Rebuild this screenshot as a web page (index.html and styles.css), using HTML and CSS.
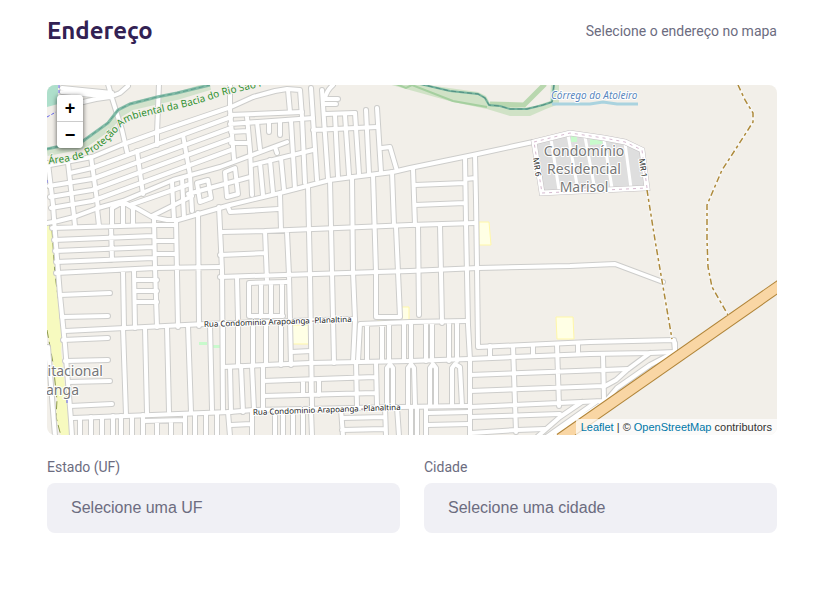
FILE: index.html
```html
<!DOCTYPE html>
<html lang="pt-BR">
<head>
<meta charset="utf-8">
<meta name="viewport" content="width=device-width, initial-scale=1">
<title>Endereço</title>
<link rel="stylesheet" href="styles.css">
</head>
<body>
<form class="address">
  <header class="legend">
    <h2 class="legend-title">Endereço</h2>
    <span class="legend-hint">Selecione o endereço no mapa</span>
  </header>

  <div class="map">
    <svg class="map-canvas" viewBox="47 85 730 350" preserveAspectRatio="xMidYMid slice" role="img" aria-label="Mapa">
      <defs>
        <path id="area-label" d="M49 164C60 163 74 161 84 157C102 149 112 137 122 126C130 118 146 116 163 112C182 108 202 103 221 96L275 83"/>
        <g id="roads">
          <!-- north-west grid -->
          <path d="M108 84L112 98L122 130L127 152M159 84L157 133M157 145L157 133M62 88L112 93M62 92L112 97M83 102L96 99L110 97L120 93L128 86M60 104L84 102"/>
          <path d="M50 165L92 157L121 145L157 132L231 107L253 97L275 91L287 89L300 90L302 117L305 183"/>
          <path d="M70 173L92 168L231 117M49 186L92 179L231 128M50 197L92 190L231 139M51 208L92 201L231 150M47 223L58 221L74 217L98 208L123 201L173 180L220 167L287 142M152 216L192 196M130 205L190 184"/>
          <path d="M48 163L53 205L55 233L60 295L65 345L71 420L72 436M68 163L74 216M91 157L98 208M137 151L143 194M183 135L190 175L192 211M172 182L174 220M182 178L184 218"/>
          <path d="M230 84L230 110L234 159M230 115L302 112M230 124L313 118M247 117L250 150L252 195M231 132L247 131M231 143L248 143"/>
          <path d="M257 122L260 149M269 122V132M280 121V135M291 121L295 189M288 90L290 112M275 147L277 153M252 165L313 150M260 163L263 195M270 160L273 193M281 158L284 190"/>
          <path d="M197 183L208 180L211 198L200 202ZM225 172L235 168L238 194L227 197ZM188 194L250 177"/>
          <path d="M311 88L317 180M322 90L328 179M333 85Q326 91 325 99M323 99H338M323 104H336M325 114L355 113M313 130L377 127"/>
          <path d="M335 115L338 177M345 115L349 175M355 113L359 174M366 110L369 173M377 108L381 172M382 148L390 147L397 171"/>
          <!-- central avenues -->
          <path d="M123 202L138 209L152 217L167 220L178 220L230 205L280 193L330 180L353 177L393 172L410 168L473 155L533 142"/>
          <path d="M280 194L281 230M308 187L310 275L312 407M330 180L332 273L334 363M352 177L353 272L355 320L353 362M373 175L376 272L376 317H400M392 172L394 225M396 227L400 317M228 207L230 212L278 209"/>
          <path d="M222 232L265 231L410 225L475 223M220 255L265 253M265 231L267 281M287 232L289 275L291 365M220 277L377 272L410 271L478 268L570 266L615 264L663 282"/>
          <path d="M219 207L222 270L223 412M237 278L238 320M249 283L287 282M249 283V316H283M261 283V316M271 283V316M282 283V316"/>
          <path d="M413 169L415 225M415 205L465 203M415 185L465 183M466 179L475 178M465 157L466 223L468 325L470 360L470 436M475 155L476 200L477 268L478 347L590 342L674 340L675 352M418 225L419 315M440 225L442 323"/>
          <!-- west -->
          <path d="M123 202L112 208V224M123 202V225M123 202L133 208V224M97 208L99 226M74 216L75 226M52 228L154 225H176M54 240L153 236M55 251L153 247M56 262L153 258M56 273L155 268L220 267M155 241H175M155 254H175M111 227L112 260M154 219L155 268L157 327M176 220L178 327M198 213L199 326M123 271L124 328M134 271L135 328"/>
          <path d="M135 280H157M135 291H157M135 302H157M60 295L110 293M62 317L108 316M63 340L108 338M65 361L108 360M68 382L110 381M70 406L112 404"/>
          <path d="M65 331L205 324L355 319M223 367L310 363L410 361L469 359L513 357L590 354L650 353L675 352"/>
          <path d="M123 328L126 415M145 328L147 413M167 327L169 412M188 326L191 412M210 325L212 410M48 347L55 436"/>
          <!-- south centre -->
          <path d="M358 361L360 324L410 322L467 321M367 324V361M382 324V361M389 324V361M404 323V361M411 323L411 361M426 322L426 361M432 322V361M449 322V361M457 322V361"/>
          <path d="M223 325V367M238 325V366M253 323V366M266 322V365M281 321V365M291 352L311 351M230 367L231 412M241 366L243 412M252 366L254 410M263 366L263 410M263 381L375 377M263 396L375 393M303 380V395M311 380V395M319 380V395M356 362L357 407M376 363L377 406"/>
          <path d="M387 406V368L390 364L393 368V406M408 406V368L411 364L414 368L415 406M430 406V368L433 364L436 368V406M452 406V368L455 364L460 367L462 406"/>
          <path d="M73 418L126 416L230 412L253 410L401 407L468 406"/>
          <path d="M80 418V436M91 417V436M102 417V436M113 416V436M121 416V436M132 416V436M143 415V436M157 421V436M171 421V436M185 414V436M195 414V436M206 413V436M217 413V436M228 412L230 436M252 411V436M275 410V436M283 410V436M293 410V436M303 410V436M311 410L312 436M341 409L343 436M385 407L386 436M397 407L399 436M411 407V436M417 407V436M426 407V436M143 421L184 420M231 425L251 424M342 418L384 417M342 430L384 429M427 413L469 412M427 425L469 424"/>
          <!-- south-east -->
          <path d="M490 346V358M513 346L516 432M533 345V356M557 345L559 406M578 343V354M603 355L604 400M470 375L603 370L628 369M470 391L604 386M470 407L559 403L603 401M470 417L560 414M471 433L517 430L545 429"/>
          <path d="M650 353L627 370L616 380L605 386M673 353L650 365L617 388L605 402L565 428L550 440M582 402L560 417L537 437M596 402L545 438"/>
          <path d="M675 343V353"/>
        </g>
        <path id="compound" d="M534 142L570 133L604 138L625 142L642 150L647 188L542 193Z"/>
      </defs>

      <rect x="-400" y="85" width="1624" height="350" fill="#f2efe9"/>
      <path d="M47 85H58V104L47 107Z" fill="#aedfcb"/>

      <g class="line">
        <path d="M47 152L83 145L108 127L120 113L132 106L177 96L210 86" stroke="#c9dfc4" stroke-width="8" opacity=".8"/>
      </g>

      <path d="M388 84L453 102L487 109L510 116H530L546 109L559 104V84H551L550 101L535 106L522 108L500 104L490 103L486 96L478 92L420 84Z" fill="#d0e2c6"/>
      <g class="line">
        <path d="M396 84L406 88L412 85L453 101L487 107" stroke="#a5cf9f" stroke-width="2"/>
        <path d="M545 84L524 105L490 104" stroke="#b9d7af" stroke-width="5"/>
        <path d="M420 84L450 91L478 94L485 98L489 105L500 106L510 109H527L543 105L552 102L554 84" stroke="#72b29c" stroke-width="2"/>
        <path d="M420 84L450 91L478 94L485 98L489 105L500 106L510 109H527L543 105L552 102L554 84" stroke="#548f83" stroke-dasharray="5 3"/>
        <path d="M552 104H590L603 102L617 104H638" stroke="#aad3df" stroke-width="3"/>
      </g>

      <path d="M47 220L52 230L55 275L62 325L63 332L61 350L65 387L68 408L72 418L70 436H61L56 417L57 400L53 363L47 330Z" fill="#f7fabf"/>
      <path class="line" d="M47 220L52 230L55 275L62 325M47 330L53 363L57 400L56 417L61 436" stroke="#8c9a4b" stroke-dasharray="8 4"/>

      <g fill="#ffffe5" stroke="#fff7a8">
        <path d="M479 222H489L491 245H479ZM400 307H409V321H378V319H400ZM556 317H573L574 339H557ZM292 325H309V344H292Z"/>
      </g>
      <path d="M199 342H207V345H199ZM213 345H220V348H213Z" fill="#c8facc"/>

      <use href="#compound" fill="#dedede"/>
      <path d="M571 136H577V142H571ZM590 139L603 141L602 144L590 145Z" fill="#c8facc"/>

      <use href="#roads" class="road-casing"/>
      <use href="#roads" class="road-fill"/>
      <g class="line">
        <path d="M551 139L559 190M568 135L578 190M585 137L595 190M604 140L612 188M625 143L631 188" stroke="#fff" stroke-width="3"/>
        <use href="#compound" stroke="#c4c0c2" stroke-width="6"/>
        <use href="#compound" stroke="#fff" stroke-width="5"/>
        <use href="#compound" stroke="#d6b9cf" stroke-dasharray="3 4"/>
      </g>

      <g class="line">
        <path d="M47 149L83 141L108 123L118 110L130 104L157 97L177 93L210 85" stroke="#7ab7a2" stroke-width="3" opacity=".9"/>
        <path d="M47 149L83 141L108 123L118 110L130 104L157 97L177 93L210 85" stroke="#5fa08f" stroke-dasharray="5 3"/>
        <path d="M782 284L560 439" stroke="#b08438" stroke-width="12"/>
        <path d="M782 284L560 439" stroke="#f9d6a4" stroke-width="10"/>
        <path d="M647 190L655 240L672 339M738 85L745 100L753 113L753 122L737 147L722 170L707 205V240L708 267L712 287L728 315" stroke="#fff" stroke-width="3" opacity=".5"/>
        <path d="M647 190L655 240L672 339M738 85L745 100L753 113L753 122L737 147L722 170L707 205V240L708 267L712 287L728 315" stroke="#ad8a3b" stroke-width="1.5" stroke-dasharray="6 3 3 3"/>
        <path d="M59 85V94M47 117L56 112M47 180V184M67 400V403" stroke="#6464ee" stroke-dasharray="3 2"/>
      </g>

      <g class="map-text">
        <text class="text-area"><textPath href="#area-label">Área de Proteção Ambiental da Bacia do Rio São F</textPath></text>
        <text class="text-river" x="551" y="99">Córrego do Atoleiro</text>
        <g class="text-place">
          <text x="584" y="156">Condomínio</text>
          <text x="584" y="174">Residencial</text>
          <text x="584" y="192">Marisol</text>
        </g>
        <g class="text-place text-end">
          <text x="103" y="376">itacional</text>
          <text x="79" y="395">anga</text>
        </g>
        <g class="text-street">
          <text transform="translate(204 327) rotate(-2)">Rua Condominio Arapoanga -Planaltina</text>
          <text transform="translate(253 415) rotate(-2)">Rua Condominio Arapoanga -Planaltina</text>
          <text transform="translate(533 158) rotate(82)">MR 6</text>
          <text transform="translate(639 159) rotate(82)">MR 1</text>
        </g>
      </g>
    </svg>

    <div class="zoom">
      <button class="zoom-button" type="button" title="Zoom in">+</button>
      <button class="zoom-button" type="button" title="Zoom out">−</button>
    </div>
    <div class="attribution"><a href="#leaflet">Leaflet</a> | © <a href="#osm">OpenStreetMap</a> contributors</div>
  </div>

  <div class="fields">
    <div class="field">
      <label for="uf">Estado (UF)</label>
      <select id="uf" name="uf"><option value="0">Selecione uma UF</option></select>
    </div>
    <div class="field">
      <label for="city">Cidade</label>
      <select id="city" name="city"><option value="0">Selecione uma cidade</option></select>
    </div>
  </div>
</form>
</body>
</html>
```
FILE: styles.css
```css
* {
  box-sizing: border-box;
  margin: 0;
  padding: 0;
}

body {
  background: #fff;
  color: #6c6c80;
  font: 14px/16px Roboto, sans-serif;
}

.address {
  padding: 16px 51px 60px 47px;
}

.legend {
  display: flex;
  justify-content: space-between;
  align-items: center;
  margin-bottom: 40px;
}

.legend-title {
  color: #322153;
  font: 700 24px/29px Ubuntu, "Noto Sans", sans-serif;
}

.map {
  position: relative;
  height: 350px;
  margin-bottom: 24px;
  border-radius: 8px;
  overflow: hidden;
}

.map-canvas {
  display: block;
  width: 100%;
  height: 100%;
}

.line {
  fill: none;
}

.road-casing,
.road-fill {
  fill: none;
  stroke-linecap: round;
  stroke-linejoin: round;
}

.road-casing {
  stroke: #cdcdcb;
  stroke-width: 6px;
}

.road-fill {
  stroke: #fff;
  stroke-width: 4px;
}

.map-text {
  font-family: "Noto Sans", sans-serif;
  paint-order: stroke;
  stroke: #fff;
  stroke-width: 2px;
  stroke-linejoin: round;
}

.text-area {
  fill: #2f8f2f;
  font-size: 10px;
  stroke: #f2efe9;
}

.text-river {
  fill: #5a87bd;
  font-size: 10px;
  font-style: italic;
}

.text-place {
  fill: #777;
  font-size: 14px;
  text-anchor: middle;
}

.text-end {
  text-anchor: end;
}

.text-street {
  fill: #222;
  font-size: 8px;
}

.zoom {
  position: absolute;
  top: 10px;
  left: 10px;
  width: 26px;
  border-radius: 4px;
  box-shadow: 0 1px 5px rgba(0, 0, 0, 0.65);
}

.zoom-button {
  display: block;
  width: 26px;
  height: 27px;
  border: 0;
  border-bottom: 1px solid #ccc;
  border-radius: 4px 4px 0 0;
  background: #fff;
  color: #000;
  font: 700 18px/26px "Liberation Sans", sans-serif;
}

.zoom-button:last-child {
  height: 26px;
  border-bottom: 0;
  border-radius: 0 0 4px 4px;
}

.attribution {
  position: absolute;
  right: 0;
  bottom: 0;
  padding: 0 5px;
  background: rgba(255, 255, 255, 0.7);
  color: #333;
  font: 11px/16px "Liberation Sans", sans-serif;
}

.attribution a {
  color: #0078a8;
  text-decoration: none;
}

.fields {
  display: grid;
  grid-template-columns: 1fr 1fr;
  gap: 24px;
}

.field {
  display: flex;
  flex-direction: column;
  gap: 8px;
}

select {
  width: 100%;
  height: 50px;
  padding: 0 24px;
  border: 0;
  border-radius: 8px;
  background: #f0f0f5;
  color: #6c6c80;
  font: 16px/20px "Liberation Sans", sans-serif;
  appearance: none;
}
```
